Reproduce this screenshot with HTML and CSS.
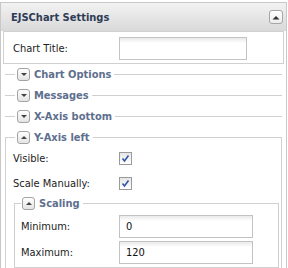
FILE: index.html
```html
<!DOCTYPE html>
<html lang="en">
<head>
    <meta charset="UTF-8">
    <meta name="viewport" content="width=device-width, initial-scale=1.0">
    <title>EJSChart Settings</title>
    <link rel="stylesheet" href="styles.css">
</head>
<body>
    <div class="panel">
        <div class="panel-header">
            <span class="panel-title">EJSChart Settings</span>
            <span class="tool-btn">
                <svg width="8" height="5" viewBox="0 0 8 5"><path d="M0.5 4.5 L4 1 L7.5 4.5 Z" fill="#333"/></svg>
            </span>
        </div>
        <div class="panel-body">
            <div class="title-row">
                <label class="field-label">Chart Title:</label>
                <input type="text" class="text-field title-field">
            </div>
            <fieldset class="group first">
                <legend><span class="legend-inner"><span class="toggle down"></span>Chart Options</span></legend>
            </fieldset>
            <fieldset class="group">
                <legend><span class="legend-inner"><span class="toggle down"></span>Messages</span></legend>
            </fieldset>
            <fieldset class="group">
                <legend><span class="legend-inner"><span class="toggle down"></span>X-Axis bottom</span></legend>
            </fieldset>
            <fieldset class="group open">
                <legend><span class="legend-inner"><span class="toggle up"></span>Y-Axis left</span></legend>
                <div class="form-row">
                    <label class="field-label">Visible:</label>
                    <span class="check"><svg width="11" height="11" viewBox="0 0 11 11"><path d="M2.5 5.5 L4.5 8 L8.5 2.5" fill="none" stroke="#2f55a8" stroke-width="1.6"/></svg></span>
                </div>
                <div class="form-row">
                    <label class="field-label">Scale Manually:</label>
                    <span class="check"><svg width="11" height="11" viewBox="0 0 11 11"><path d="M2.5 5.5 L4.5 8 L8.5 2.5" fill="none" stroke="#2f55a8" stroke-width="1.6"/></svg></span>
                </div>
                <fieldset class="group open inner">
                    <legend><span class="legend-inner"><span class="toggle up"></span>Scaling</span></legend>
                    <div class="scale-rows">
                        <div class="scale-row">
                            <label class="field-label">Minimum:</label>
                            <input type="text" class="text-field scale-field" value="0">
                        </div>
                        <div class="scale-row">
                            <label class="field-label">Maximum:</label>
                            <input type="text" class="text-field scale-field" value="120">
                        </div>
                    </div>
                </fieldset>
            </fieldset>
        </div>
    </div>
</body>
</html>
```

FILE: styles.css
```css
body
{
    margin: 0;
    font-family: "DejaVu Sans Condensed", "DejaVu Sans", Tahoma, sans-serif;
    font-size: 11px;
    color: #222;
    background: #fff;
}
.panel
{
    margin-top: 2px;
    width: 287px;
    height: 266px;
    box-sizing: border-box;
    border: 1px solid #c8c8c8;
    border-bottom: none;
    overflow: hidden;
}
.panel-header
{
    height: 28px;
    display: flex;
    align-items: center;
    justify-content: space-between;
    padding: 0 3px 0 10px;
    background: linear-gradient(#f2f2f2, #d9d9d9);
}
.panel-title
{
    font-weight: bold;
    color: #2e3b55;
}
.tool-btn
{
    width: 14px;
    height: 14px;
    box-sizing: border-box;
    border: 1px solid #a6a6a6;
    border-radius: 3px;
    background: linear-gradient(#fff, #ececec);
    display: flex;
    align-items: center;
    justify-content: center;
}
.panel-body
{
    padding: 0 2px;
}
.title-row
{
    display: flex;
    align-items: center;
    border: 1px solid #d0d0d0;
    padding: 5px 0 3px 9px;
}
.field-label
{
    width: 106px;
    flex: none;
}
.text-field
{
    height: 23px;
    box-sizing: border-box;
    margin: 0;
    padding: 0 6px;
    border: 1px solid #c3c3c3;
    background: linear-gradient(#e9e9e9, #fff 5px);
    font: inherit;
    color: #111;
    outline: none;
}
.title-field { width: 128px; }
.scale-field { width: 134px; }

.group
{
    min-width: 0;
    margin: 0 2px 6px;
    padding: 0 0 0 10px;
    border: none;
    border-top: 1px solid #d0d0d0;
}
.group.first { margin-top: 3px; }
.group legend
{
    padding: 0 3px 0 2px;
}
.legend-inner
{
    display: flex;
    align-items: center;
    gap: 4px;
    height: 15px;
    font-weight: bold;
    color: #5e6f8e;
}
.toggle
{
    width: 13px;
    height: 13px;
    box-sizing: border-box;
    border: 1px solid #a3a3a3;
    border-radius: 3px;
    background: linear-gradient(#fff, #e4e4e4);
    display: flex;
    align-items: center;
    justify-content: center;
}
.toggle::after
{
    content: "";
    border-left: 3px solid transparent;
    border-right: 3px solid transparent;
}
.toggle.down::after { border-top: 3px solid #444; }
.toggle.up::after { border-bottom: 3px solid #444; }

.group.open
{
    border: 1px solid #d0d0d0;
    padding: 1px 2px 0 7px;
    margin-bottom: 0;
}
.group.open > legend { margin-left: 2px; }
.group.open.inner
{
    margin: 0 0 0 1px;
    padding: 0 0 3px 6px;
}
.group.open.inner > legend
{
    margin-left: 0;
    padding-left: 1px;
}
.form-row
{
    display: flex;
    align-items: center;
    height: 25px;
}
.check
{
    width: 13px;
    height: 13px;
    box-sizing: border-box;
    border: 1px solid #9a9a9a;
    background: linear-gradient(#e6e6e6, #fff);
    display: flex;
    align-items: center;
    justify-content: center;
}
.scale-rows
{
    display: grid;
    gap: 3px;
    padding-top: 4px;
}
.scale-row
{
    display: flex;
    align-items: center;
}
.scale-row .field-label { width: 98px; }
```
